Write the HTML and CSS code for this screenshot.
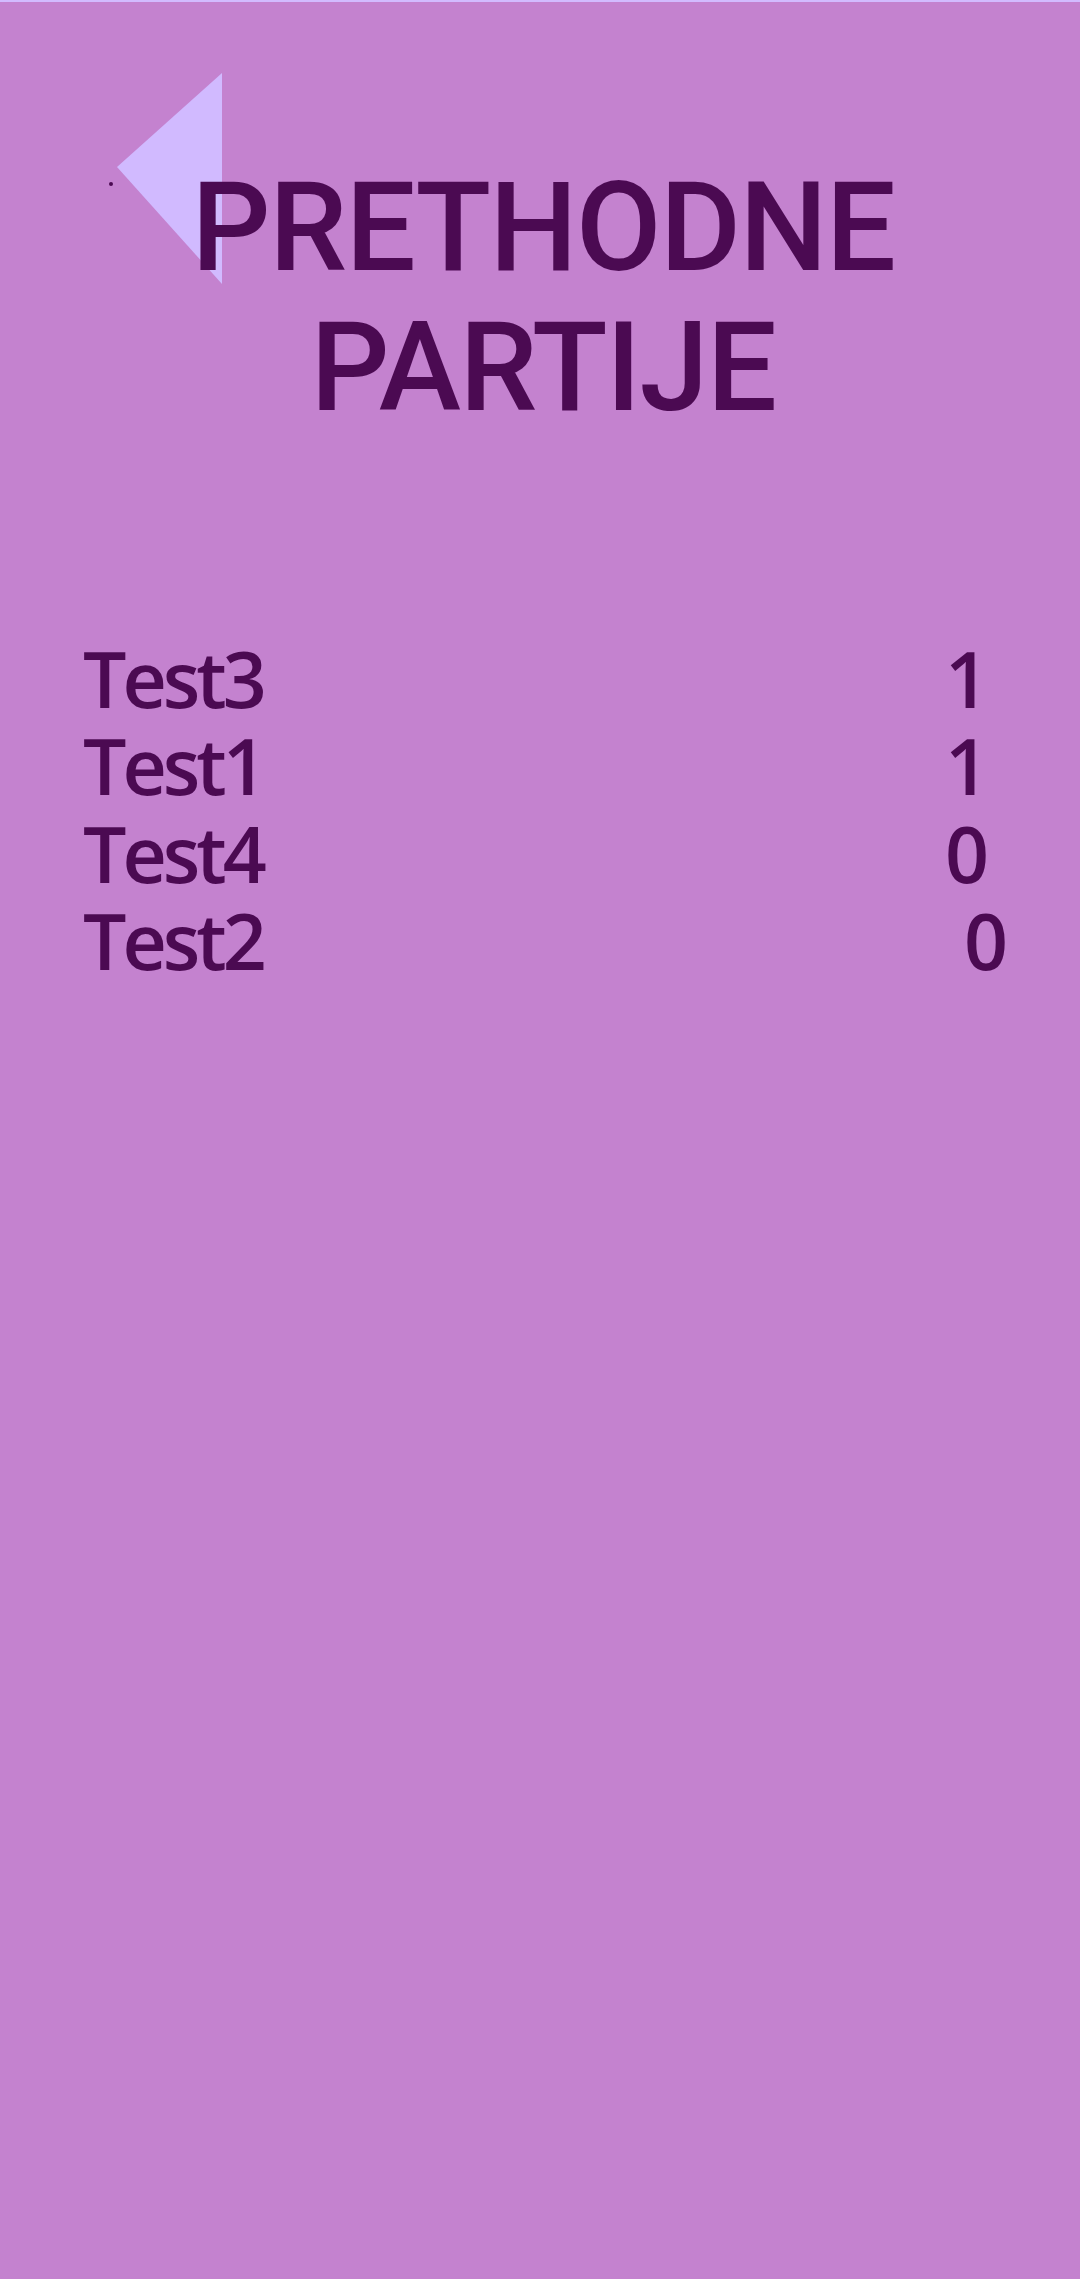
FILE: index.html
```html
<!DOCTYPE html>
<html lang="sr">
<head>
<meta charset="utf-8">
<title>Prethodne partije</title>
<link rel="stylesheet" href="styles.css">
</head>
<body>
<div class="topline"></div>
<header class="header">
  <button class="back" aria-label="Nazad">
    <svg class="back-icon" width="106" height="212" viewBox="0 0 106 212"><polygon points="105,0 0,94 105,211" fill="#D1BAFF"/></svg>
  </button>
  <span class="dot"></span>
  <h1 class="title">PRETHODNE<br>PARTIJE</h1>
</header>
<main class="list">
  <div class="row"><span class="name">Test3</span><span class="score">1</span></div>
  <div class="row"><span class="name">Test1</span><span class="score">1</span></div>
  <div class="row"><span class="name">Test4</span><span class="score">0</span></div>
  <div class="row"><span class="name">Test2</span><span class="score score--shift">0</span></div>
</main>
</body>
</html>
```
FILE: styles.css
```css
html, body {
  margin: 0;
  padding: 0;
}
body {
  width: 1080px;
  height: 2279px;
  background: #C482CF;
  color: #4B0A52;
  overflow: hidden;
}
.topline {
  height: 2px;
  background: #D2BBFF;
}
.header {
  position: relative;
  padding-top: 156px;
}
.back {
  position: absolute;
  left: 117px;
  top: 71px;
  padding: 0;
  margin: 0;
  border: 0;
  background: none;
  line-height: 0;
}
.dot {
  position: absolute;
  left: 109px;
  top: 180px;
  width: 4px;
  height: 4px;
  border-radius: 50%;
  background: #4B0A52;
}
.title {
  position: relative;
  margin: 0;
  padding-left: 6px;
  text-align: center;
  font-family: "Roboto", sans-serif;
  font-weight: 500;
  font-size: 124px;
  line-height: 140px;
  letter-spacing: -1.5px;
  color: #4B0A52;
}
.list {
  margin-top: 197px;
  padding-left: 83px;
  font-family: "Open Sans", sans-serif;
  font-weight: 600;
  font-size: 77px;
  letter-spacing: -4px;
}
.row {
  display: grid;
  grid-template-columns: 1fr 120px;
  height: 87.3px;
  line-height: 87.3px;
  padding-right: 53px;
}
.score {
  text-align: center;
  letter-spacing: 0;
}
.score--shift {
  padding-left: 38px;
}
```
